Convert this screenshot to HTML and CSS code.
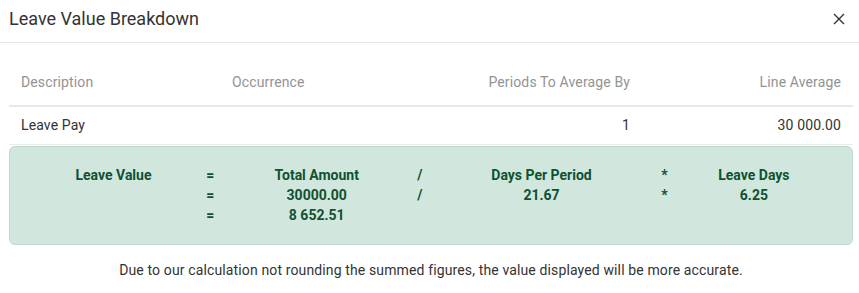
FILE: index.html
```html
<!DOCTYPE html>
<html lang="en">
<head>
<meta charset="utf-8">
<title>Leave Value Breakdown</title>
<link rel="stylesheet" href="styles.css">
</head>
<body>
<div class="modal">
  <div class="modal-header">
    <h5 class="modal-title">Leave Value Breakdown</h5>
    <button class="close" aria-label="Close">
      <svg width="12" height="12" viewBox="0 0 12 12"><path d="M1 1L11 11M11 1L1 11" stroke="#333" stroke-width="1.4" fill="none"/></svg>
    </button>
  </div>
  <div class="modal-body">
    <table class="lines">
      <thead>
        <tr>
          <th class="left">Description</th>
          <th class="left">Occurrence</th>
          <th class="right">Periods To Average By</th>
          <th class="right">Line Average</th>
        </tr>
      </thead>
      <tbody>
        <tr>
          <td class="left">Leave Pay</td>
          <td class="left"></td>
          <td class="right">1</td>
          <td class="right">30 000.00</td>
        </tr>
      </tbody>
    </table>
    <div class="formula">
      <table class="calc">
        <tr><td>Leave Value</td><td>=</td><td>Total Amount</td><td>/</td><td>Days Per Period</td><td>*</td><td>Leave Days</td></tr>
        <tr><td></td><td>=</td><td>30000.00</td><td>/</td><td>21.67</td><td>*</td><td>6.25</td></tr>
        <tr><td></td><td>=</td><td>8 652.51</td><td></td><td></td><td></td><td></td></tr>
      </table>
    </div>
    <p class="note">Due to our calculation not rounding the summed figures, the value displayed will be more accurate.</p>
  </div>
</div>
</body>
</html>
```

FILE: styles.css
```css
* { box-sizing: border-box; }
html, body { margin: 0; padding: 0; background: #fff; }
body { font-family: Roboto, "Liberation Sans", sans-serif; color: #333; font-size: 14px; }

.modal { width: 859px; }

.modal-header {
  display: flex;
  align-items: center;
  justify-content: space-between;
  padding: 8px 14px 13px 9px;
  border-bottom: 1px solid #e6e6e6;
}
.modal-title {
  margin: 0;
  font-size: 18px;
  font-weight: 400;
  line-height: 21px;
  color: #333;
}
.close {
  border: 0;
  background: none;
  padding: 0;
  width: 12px;
  height: 12px;
  display: flex;
  cursor: pointer;
}

.modal-body { padding: 17px 6px 0 9px; }

.lines {
  width: 100%;
  border-collapse: collapse;
  table-layout: fixed;
}
.lines th, .lines td {
  line-height: 21px;
  font-size: 14px;
  letter-spacing: 0.13px;
}
.lines th {
  font-weight: 400;
  color: #939393;
  padding: 12px;
  border-bottom: 2px solid #e8e8e8;
}
.lines td {
  color: #333;
  padding: 8px 12px;
  border-bottom: 1px solid #ececec;
}
.left { text-align: left; }
.right { text-align: right; }

.formula {
  margin-top: 1px;
  background: #d1e7dd;
  border: 1px solid #badbcc;
  border-radius: 6px;
  padding: 18px 16px 19px;
  color: #0f5132;
}
.calc {
  width: 100%;
  border-collapse: collapse;
}
.calc td {
  padding: 0;
  text-align: center;
  font-weight: 700;
  font-size: 14px;
  line-height: 20px;
}

.note {
  margin: 15px 0 0;
  text-align: center;
  line-height: 21px;
  font-size: 14px;
  letter-spacing: 0.13px;
  color: #333;
}
```
